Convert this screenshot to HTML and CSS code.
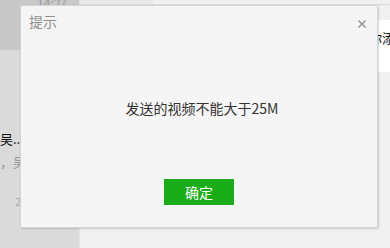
FILE: index.html
```html
<!DOCTYPE html>
<html>
	<head>
		<meta charset="UTF-8">
		<title>提示</title>
		<link rel="stylesheet" href="styles.css">
	</head>
	<body>
		<div class="app">
			<div class="side">
				<div class="side-top">
					<span class="time">14:27</span>
				</div>
				<div class="side-item">
					<p class="name">吴..</p>
					<p class="desc">，吴</p>
					<p class="date">2</p>
				</div>
			</div>
			<div class="main">
				<div class="main-bar">
					<div class="bar-left"></div>
					<div class="bar-right"></div>
				</div>
				<div class="main-body">
					<div class="notice">你添</div>
				</div>
			</div>
		</div>

		<div class="dialog">
			<div class="dialog-head">
				<span class="dialog-title">提示</span>
				<a class="dialog-close" href="javascript:void(0);">
					<svg width="8" height="8" viewBox="0 0 8 8">
						<path d="M0.5 0.5L7.5 7.5M7.5 0.5L0.5 7.5" stroke="#8a8a8a" stroke-width="1.2"/>
					</svg>
				</a>
			</div>
			<div class="dialog-body">发送的视频不能大于25M</div>
			<div class="dialog-foot">
				<input class="btn-ok" type="button" value="确定">
			</div>
		</div>
	</body>
</html>
```

FILE: styles.css
```css
* {
	margin: 0;
	padding: 0;
}
body {
	width: 390px;
	height: 248px;
	overflow: hidden;
	font-family: "Noto Sans CJK SC", "Noto Sans", sans-serif;
	background-color: #f3f3f3;
}
.app {
	display: flex;
	height: 248px;
}
.side {
	width: 79px;
	display: flex;
	flex-direction: column;
	background-color: #dadada;
}
.side-top {
	height: 50px;
	background-color: #c8c8c8;
	position: relative;
	overflow: hidden;
}
.time {
	position: absolute;
	left: 37px;
	top: -6px;
	font-size: 12px;
	color: #9a9a9a;
}
.side-item {
	padding-top: 79px;
	font-size: 13px;
	line-height: 20px;
}
.name {
	color: #111;
}
.desc {
	color: #999;
	margin-top: 3px;
}
.date {
	color: #aaa;
	padding-left: 15px;
	margin-top: 19px;
	font-size: 11px;
}
.main {
	flex: 1;
	display: flex;
	flex-direction: column;
	border-left: 1px solid #e4e4e4;
}
.main-bar {
	height: 4px;
	display: flex;
	border-bottom: 1px solid #d9d9d9;
}
.bar-left {
	width: 73px;
	background-color: #e8e8e8;
}
.bar-right {
	flex: 1;
	background-color: #f0f0f0;
}
.main-body {
	flex: 1;
	background-color: #f0f0f0;
	padding-top: 15px;
	display: flex;
	flex-direction: column;
	align-items: flex-end;
}
.notice {
	width: 60px;
	height: 52px;
	background-color: #fff;
	font-size: 13px;
	line-height: 20px;
	padding-top: 8px;
	box-sizing: border-box;
	color: #111;
	text-indent: 1px;
	white-space: nowrap;
	margin-right: -38px;
}
.dialog {
	position: absolute;
	left: 20px;
	top: 5px;
	width: 356px;
	height: 221px;
	background-color: #f5f5f5;
	border: 1px solid #d4d4d4;
	border-radius: 2px;
	box-shadow: 1px 1px 2px rgba(0, 0, 0, 0.15);
	display: flex;
	flex-direction: column;
}
.dialog-head {
	height: 30px;
	display: flex;
	justify-content: space-between;
	padding: 5px 11px 0 8px;
}
.dialog-title {
	font-size: 14px;
	line-height: 20px;
	color: #8e8e8e;
}
.dialog-close {
	display: block;
	width: 8px;
	height: 8px;
	margin-top: 9px;
}
.dialog-close svg {
	display: block;
}
.dialog-body {
	height: 85px;
	padding-top: 58px;
	box-sizing: border-box;
	text-align: center;
	font-size: 14px;
	line-height: 20px;
	color: #333;
	margin-left: 6px;
	margin-top: -1px;
}
.dialog-foot {
	display: flex;
	justify-content: center;
	padding-top: 54px;
}
.btn-ok {
	width: 70px;
	height: 26px;
	border: none;
	outline: none;
	background-color: #1aad19;
	color: #fff;
	font-family: "Noto Sans CJK SC", sans-serif;
	font-size: 14px;
	cursor: pointer;
}
```
